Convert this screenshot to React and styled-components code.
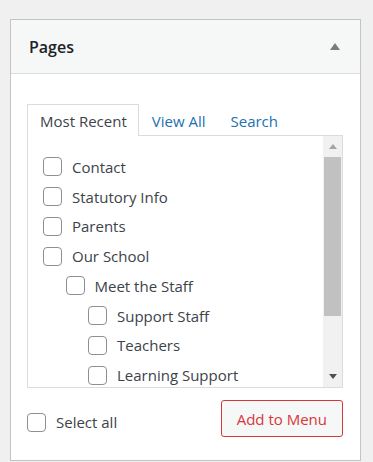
import React from "react";
import styled, { createGlobalStyle } from "styled-components";

const GlobalStyle = createGlobalStyle`
  body {
    margin: 0;
    background: #f0f0f1;
    font-family: "Open Sans", "Noto Sans", sans-serif;
    color: #2c3338;
  }
`;

const pages = [
  { title: "Contact", level: 0 },
  { title: "Statutory Info", level: 0 },
  { title: "Parents", level: 0 },
  { title: "Our School", level: 0 },
  { title: "Meet the Staff", level: 1 },
  { title: "Support Staff", level: 2 },
  { title: "Teachers", level: 2 },
  { title: "Learning Support", level: 2 },
];

const tabs = ["Most Recent", "View All", "Search"];

export default function App() {
  return (
    <>
      <GlobalStyle />
      <Page>
        <Panel>
          <Header>
            <Title>Pages</Title>
            <ToggleArrow viewBox="0 0 10 7">
              <path d="M5 0 L10 7 L0 7 Z" fill="#787c82" />
            </ToggleArrow>
          </Header>
          <Body>
            <Tabs>
              {tabs.map((t, i) => (
                <Tab key={t} $active={i === 0}>
                  {t}
                </Tab>
              ))}
            </Tabs>
            <TabPanel>
              <List>
                {pages.map((p) => (
                  <Row key={p.title} $level={p.level}>
                    <Checkbox />
                    <Label>{p.title}</Label>
                  </Row>
                ))}
              </List>
              <ScrollBar>
                <ScrollButton>
                  <svg width="8" height="5" viewBox="0 0 8 5">
                    <path d="M4 0 L8 5 L0 5 Z" fill="#a3a3a3" />
                  </svg>
                </ScrollButton>
                <Thumb />
                <ScrollTrack />
                <ScrollButton>
                  <svg width="8" height="5" viewBox="0 0 8 5">
                    <path d="M0 0 L8 0 L4 5 Z" fill="#505050" />
                  </svg>
                </ScrollButton>
              </ScrollBar>
            </TabPanel>
            <Footer>
              <SelectAll>
                <Checkbox />
                <Label>Select all</Label>
              </SelectAll>
              <AddButton>Add to Menu</AddButton>
            </Footer>
          </Body>
        </Panel>
      </Page>
    </>
  );
}

const Page = styled.div`
  padding: 19px 12px 0 10px;
  height: 462px;
  box-sizing: border-box;
  overflow: hidden;
`;

const Panel = styled.div`
  border: 1px solid #c3c4c7;
  background: #fff;
  height: 442px;
  box-sizing: border-box;
`;

const Header = styled.div`
  height: 54px;
  box-sizing: border-box;
  background: #f6f7f7;
  border-bottom: 1px solid #dcdcde;
  display: flex;
  align-items: center;
  justify-content: space-between;
  padding: 0 20px 0 18px;
`;

const Title = styled.h3`
  margin: 0;
  font-size: 16px;
  font-weight: 600;
  color: #1d2327;
`;

const ToggleArrow = styled.svg`
  width: 10px;
  height: 7px;
`;

const Body = styled.div`
  padding: 30px 17px 0 16px;
`;

const Tabs = styled.div`
  display: flex;
  height: 31px;
`;

const Tab = styled.div`
  display: flex;
  align-items: center;
  padding: 0 11px 0 12px;
  font-size: 15px;
  color: ${(p) => (p.$active ? "#3c434a" : "#2271b1")};
  background: ${(p) => (p.$active ? "#fff" : "transparent")};
  border: 1px solid ${(p) => (p.$active ? "#dcdcde" : "transparent")};
  border-bottom: none;
  margin-bottom: -1px;
  position: relative;
  z-index: 1;
`;

const TabPanel = styled.div`
  display: flex;
  height: 253px;
  box-sizing: border-box;
  border: 1px solid #dcdcde;
`;

const List = styled.div`
  flex: 1;
  overflow: hidden;
  padding: 16px 0 0 15px;
`;

const Row = styled.label`
  display: flex;
  align-items: center;
  gap: 10px;
  height: 29.75px;
  padding-left: ${(p) => p.$level * 22.5}px;
`;

const Checkbox = styled.span`
  width: 19px;
  height: 19px;
  box-sizing: border-box;
  border: 1px solid #8c8f94;
  border-radius: 4px;
  background: #fff;
  flex-shrink: 0;
`;

const Label = styled.span`
  font-size: 15px;
  color: #3c434a;
  white-space: nowrap;
`;

const ScrollBar = styled.div`
  width: 19px;
  background: #f1f1f1;
  display: flex;
  flex-direction: column;
  align-items: center;
`;

const ScrollButton = styled.div`
  height: 21px;
  width: 100%;
  display: flex;
  align-items: center;
  justify-content: center;
`;

const Thumb = styled.div`
  width: 17px;
  height: 159px;
  background: #c1c1c1;
`;

const ScrollTrack = styled.div`
  flex: 1;
`;

const Footer = styled.div`
  display: flex;
  justify-content: space-between;
  align-items: flex-start;
  padding-top: 12px;
`;

const SelectAll = styled.label`
  display: flex;
  align-items: center;
  gap: 10px;
  margin-top: 12px;
`;

const AddButton = styled.button`
  height: 37px;
  padding: 0 15px;
  font-family: inherit;
  font-size: 15px;
  color: #d63638;
  background: #f6f7f7;
  border: 1px solid #d63638;
  border-radius: 3px;
`;
